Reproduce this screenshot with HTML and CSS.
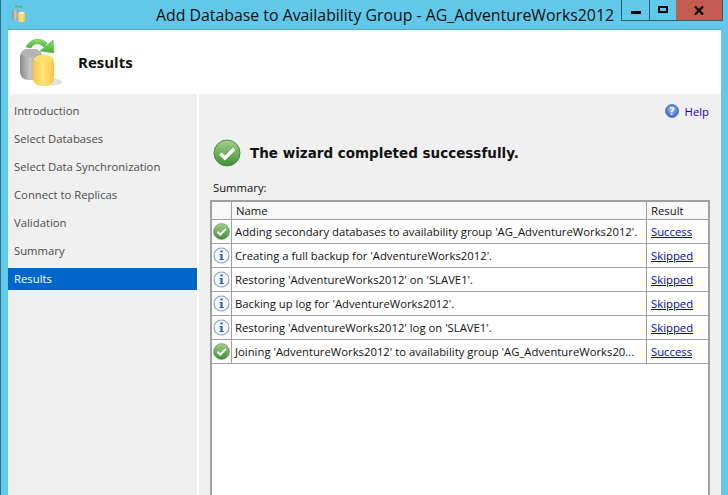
FILE: index.html
```html
<!DOCTYPE html>
<html lang="en">
<head>
  <meta charset="UTF-8">
  <title>Add Database to Availability Group</title>
  <link rel="stylesheet" href="styles.css">
</head>
<body>
  <svg class="defs" width="0" height="0">
    <defs>
      <linearGradient id="green" x1="0" y1="0" x2="0" y2="1">
        <stop offset="0" stop-color="#a3d08d"/>
        <stop offset="1" stop-color="#3f8f35"/>
      </linearGradient>
      <linearGradient id="arrow" x1="0" y1="0" x2="0" y2="1">
        <stop offset="0" stop-color="#8ede6f"/>
        <stop offset="1" stop-color="#45b034"/>
      </linearGradient>
      <linearGradient id="grey" x1="0" y1="0" x2="1" y2="0">
        <stop offset="0" stop-color="#8a8a8a"/>
        <stop offset="0.45" stop-color="#c8c8c8"/>
        <stop offset="1" stop-color="#8f8f8f"/>
      </linearGradient>
      <linearGradient id="gold" x1="0" y1="0" x2="1" y2="0">
        <stop offset="0" stop-color="#f5c342"/>
        <stop offset="0.45" stop-color="#ffe47f"/>
        <stop offset="1" stop-color="#f6c544"/>
      </linearGradient>
      <radialGradient id="blue" cx="0.5" cy="0.4" r="0.6">
        <stop offset="0" stop-color="#a9c6ee"/>
        <stop offset="1" stop-color="#2f5fb5"/>
      </radialGradient>
      <symbol id="ok" viewBox="0 0 28 28">
        <circle cx="14" cy="14" r="13" fill="url(#green)" stroke="#4c8a45"/>
        <path d="M7.500 14.500l4.500 4.500 9-9" fill="none" stroke="#fff" stroke-width="3.400"/>
      </symbol>
      <symbol id="info" viewBox="0 0 17 17">
        <circle cx="8.500" cy="8.500" r="7.500" fill="#f3f6fb" stroke="#8fa5c6" stroke-width="1.200"/>
        <rect x="7.500" y="3.500" width="2" height="2" fill="#2c5ca8"/>
        <path d="M6.500 7h3v5h1.200v1H6.300v-1h1.200V8h-1z" fill="#2c5ca8"/>
      </symbol>
    </defs>
  </svg>

  <div class="window">
    <div class="titlebar">
      <svg class="app-icon" width="16" height="18" viewBox="0 0 16 18">
        <path d="M4 1.500h6l1 1" fill="none" stroke="#55b947" stroke-width="1.600"/>
        <rect x="1" y="5" width="7" height="10" rx="2" fill="url(#grey)"/>
        <rect x="7" y="7" width="7" height="10" rx="2" fill="url(#gold)"/>
        <ellipse cx="10.500" cy="8" rx="3" ry="1" fill="#fff2b8"/>
      </svg>
      <div class="title">Add Database to Availability Group - AG_AdventureWorks2012</div>
      <div class="controls">
        <div class="ctrl ctrl-min"><span class="min-glyph"></span></div>
        <div class="ctrl ctrl-max"><span class="max-glyph"></span></div>
        <div class="ctrl ctrl-close">
          <svg width="10" height="9" viewBox="0 0 10 9"><path d="M1 0.500l8 8M9 0.500l-8 8" stroke="#000" stroke-width="2.200"/></svg>
        </div>
      </div>
    </div>

    <div class="client">
      <div class="header">
        <svg class="header-icon" width="44" height="50" viewBox="0 0 44 50">
          <ellipse cx="29" cy="44" rx="13" ry="4" fill="#e2e2e2"/>
          <path d="M6 9C11 0 20 -1 27 5l-3 4C18 4 14 5 11 10z" fill="url(#arrow)" stroke="#48a83a" stroke-width="0.500"/>
          <path d="M20 13l14 2-1-13z" fill="url(#arrow)" stroke="#48a83a" stroke-width="0.500"/>
          <rect x="0" y="11" width="22" height="31" rx="8" fill="url(#grey)"/>
          <ellipse cx="11" cy="15" rx="10" ry="4" fill="#b4b4b4"/>
          <rect x="13" y="17" width="21" height="31" rx="8" fill="url(#gold)"/>
          <ellipse cx="23.500" cy="21" rx="9.500" ry="4" fill="#ffde6e"/>
        </svg>
        <div class="header-title">Results</div>
      </div>

      <div class="body">
        <ul class="nav">
          <li>Introduction</li>
          <li>Select Databases</li>
          <li>Select Data Synchronization</li>
          <li>Connect to Replicas</li>
          <li>Validation</li>
          <li>Summary</li>
          <li class="active">Results</li>
        </ul>

        <div class="main">
          <div class="help">
            <svg width="14" height="14" viewBox="0 0 14 14">
              <circle cx="7" cy="7" r="6.500" fill="url(#blue)" stroke="#5b7fc4"/>
              <text class="help-q" x="7" y="10.500" text-anchor="middle">?</text>
            </svg>
            <span class="help-link">Help</span>
          </div>

          <div class="status">
            <svg width="28" height="28"><use href="#ok"/></svg>
            <span class="status-text">The wizard completed successfully.</span>
          </div>

          <div class="summary-label">Summary:</div>

          <div class="grid">
            <div class="row head">
              <div class="cell cell-icon"></div>
              <div class="cell cell-name">Name</div>
              <div class="cell cell-result">Result</div>
            </div>
            <div class="row">
              <div class="cell cell-icon"><svg width="17" height="17"><use href="#ok"/></svg></div>
              <div class="cell cell-name">Adding secondary databases to availability group 'AG_AdventureWorks2012'.</div>
              <div class="cell cell-result"><a href="#">Success</a></div>
            </div>
            <div class="row">
              <div class="cell cell-icon"><svg width="17" height="17"><use href="#info"/></svg></div>
              <div class="cell cell-name">Creating a full backup for 'AdventureWorks2012'.</div>
              <div class="cell cell-result"><a href="#">Skipped</a></div>
            </div>
            <div class="row">
              <div class="cell cell-icon"><svg width="17" height="17"><use href="#info"/></svg></div>
              <div class="cell cell-name">Restoring 'AdventureWorks2012' on 'SLAVE1'.</div>
              <div class="cell cell-result"><a href="#">Skipped</a></div>
            </div>
            <div class="row">
              <div class="cell cell-icon"><svg width="17" height="17"><use href="#info"/></svg></div>
              <div class="cell cell-name">Backing up log for 'AdventureWorks2012'.</div>
              <div class="cell cell-result"><a href="#">Skipped</a></div>
            </div>
            <div class="row">
              <div class="cell cell-icon"><svg width="17" height="17"><use href="#info"/></svg></div>
              <div class="cell cell-name">Restoring 'AdventureWorks2012' log on 'SLAVE1'.</div>
              <div class="cell cell-result"><a href="#">Skipped</a></div>
            </div>
            <div class="row">
              <div class="cell cell-icon"><svg width="17" height="17"><use href="#ok"/></svg></div>
              <div class="cell cell-name">Joining 'AdventureWorks2012' to availability group 'AG_AdventureWorks20...</div>
              <div class="cell cell-result"><a href="#">Success</a></div>
            </div>
          </div>
        </div>
      </div>
    </div>
  </div>
</body>
</html>
```

FILE: styles.css
```css
html, body {
  margin: 0;
  height: 100%;
  overflow: hidden;
}

body {
  font-family: 'Open Sans', 'Noto Sans', sans-serif;
  font-size: 11.3px;
  color: #111;
}

.defs {
  display: block;
  height: 0;
}

.window {
  height: 495px;
  background-color: #62c8e9;
  border-left: 1px solid #2f6f88;
  padding: 0 7px;
  display: flex;
  flex-direction: column;
  box-sizing: border-box;
}

.titlebar {
  height: 30px;
  flex: none;
  display: flex;
  position: relative;
  border-bottom: 1px solid #5aa9c4;
  box-sizing: border-box;
}

.app-icon {
  margin: 5px 0 0 3px;
}

.title {
  position: absolute;
  left: 148px;
  top: 5px;
  font-size: 15.85px;
  line-height: 20px;
  color: #111;
  white-space: nowrap;
}

.controls {
  display: flex;
  position: absolute;
  right: -2px;
  top: 0;
  height: 20px;
  border: 1px solid #2f5e72;
  border-top: none;
}

.ctrl {
  display: flex;
  justify-content: center;
  align-items: center;
}

.ctrl-min {
  width: 27px;
  border-right: 1px solid #2f5e72;
}

.ctrl-max {
  width: 26px;
}

.ctrl-close {
  width: 46px;
  background-color: #c35b50;
}

.min-glyph {
  width: 10px;
  height: 3px;
  background-color: #000;
  margin-top: 5px;
}

.max-glyph {
  width: 6px;
  height: 3px;
  border: 2px solid #000;
  margin-top: -1px;
}

.client {
  flex: 1;
  display: flex;
  flex-direction: column;
  min-height: 0;
}

.header {
  height: 64px;
  flex: none;
  background-color: #fff;
  display: flex;
  align-items: center;
}

.header-icon {
  margin: 2px 0 0 12px;
}

.header-title {
  margin-left: 14px;
  font-size: 15px;
  font-weight: 700;
  color: #111;
}

.body {
  flex: 1;
  display: flex;
  min-height: 0;
}

.nav {
  list-style: none;
  margin: 0;
  padding: 6px 0 0;
  width: 189px;
  flex: none;
  background-color: #f0f0f0;
  border-right: 2px solid #fff;
}

.nav li {
  height: 22px;
  line-height: 22px;
  margin-bottom: 6px;
  padding-left: 6px;
  color: #4c4c4c;
}

.nav li.active {
  background-color: #0066cc;
  color: #fff;
}

.main {
  flex: 1;
  background-color: #f0f0f0;
  padding: 0 11px;
  min-width: 0;
  display: flex;
  flex-direction: column;
}

.help {
  display: flex;
  align-items: center;
  justify-content: flex-end;
  gap: 6px;
  height: 22px;
  margin: 6px 1px 0 0;
}

.help-link {
  color: #2200cc;
}

.help-q {
  font-size: 10px;
  font-weight: 700;
  fill: #fff;
}

.status {
  display: flex;
  align-items: center;
  gap: 9px;
  margin: 17px 0 0 3px;
  height: 28px;
}

.status-text {
  font-family: 'DejaVu Sans', Verdana, sans-serif;
  font-size: 13.5px;
  font-weight: 700;
  color: #111;
}

.summary-label {
  margin: 13px 0 0 3px;
  line-height: 16px;
}

.grid {
  flex: 1;
  margin: 4px 0 0;
  background-color: #fff;
  border: 2px solid #a0a0a0;
  border-bottom: none;
}

.row {
  display: flex;
  height: 24px;
  box-sizing: border-box;
  border-bottom: 1px solid #a0a0a0;
}

.row.head {
  height: 18px;
  background-color: #f8f8f8;
}

.cell {
  display: flex;
  align-items: center;
  box-sizing: border-box;
  white-space: nowrap;
  overflow: hidden;
}

.cell-icon {
  width: 20px;
  justify-content: center;
  border-right: 1px solid #a0a0a0;
}

.cell-name {
  width: 415px;
  padding-left: 3px;
  border-right: 1px solid #a0a0a0;
}

.head .cell-name {
  padding-left: 4px;
}

.cell-result {
  flex: 1;
  padding-left: 4px;
}

.cell-result a {
  color: #0000cc;
}
```
